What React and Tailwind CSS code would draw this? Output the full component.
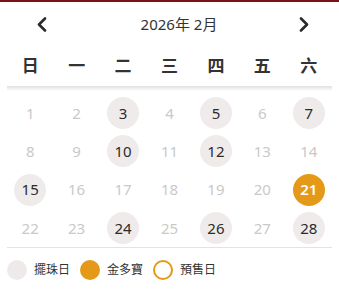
import React from "react";

const weekdays = ["日", "一", "二", "三", "四", "五", "六"];

// 擺珠日 days (gray), 金多寶 day (orange)
const marked = [3, 5, 7, 10, 12, 15, 24, 26, 28];
const jackpot = [21];

const days = Array.from({ length: 28 }, (_, i) => i + 1);

const Chevron = ({ dir }) => (
  <svg width="12" height="15" viewBox="0 0 12 15" fill="none">
    <path
      d={dir === "left" ? "M9 1.5 L3 7.5 L9 13.5" : "M3 1.5 L9 7.5 L3 13.5"}
      stroke="#2b2b2b"
      strokeWidth="2.6"
      strokeLinecap="round"
      strokeLinejoin="round"
    />
  </svg>
);

const App = () => {
  return (
    <div
      className="w-[339px] h-[291px] bg-white border-t-2 border-[#7a1414] overflow-hidden"
      style={{ fontFamily: '"Noto Sans", "Noto Sans CJK TC", sans-serif' }}
    >
      {/* HEADER */}
      <div className="h-[44px] flex items-center pl-[36px] pr-[29px]">
        <Chevron dir="left" />
        <div className="flex-1 text-center pl-[12px] text-[15px] text-[#333]">
          2026年 2月
        </div>
        <Chevron dir="right" />
      </div>

      {/* WEEKDAYS */}
      <div className="mx-[7px] grid grid-cols-7 h-[40px] items-center">
        {weekdays.map((w) => (
          <div
            key={w}
            className="text-center text-[17px] font-semibold text-[#333]"
          >
            {w}
          </div>
        ))}
      </div>
      <div className="mx-[7px] h-[5px] bg-gradient-to-b from-[#e0e0e0] to-white" />

      {/* DAYS */}
      <div className="mx-[7px] mt-[3px] grid grid-cols-7">
        {days.map((d) => {
          const isMarked = marked.includes(d);
          const isJackpot = jackpot.includes(d);
          return (
            <div key={d} className="h-[38.3px] flex items-center justify-center">
              <div
                className={`w-[32px] h-[32px] rounded-full flex items-center justify-center text-[15px] ${
                  isJackpot
                    ? "bg-[#e49a18] text-white font-semibold"
                    : isMarked
                    ? "bg-[#f0ebeb] text-[#2b2b2b]"
                    : "text-[#c9c9c9]"
                }`}
              >
                {d}
              </div>
            </div>
          );
        })}
      </div>

      {/* LEGEND */}
      <div className="mx-[7px] border-t border-[#e3e3e3] pt-[12px] flex items-center text-[12px] text-[#333]">
        <span className="w-[20px] h-[20px] rounded-full bg-[#efeaea]" />
        <span className="ml-[7px]">擺珠日</span>
        <span className="ml-[10px] w-[20px] h-[20px] rounded-full bg-[#e49a18]" />
        <span className="ml-[7px]">金多寶</span>
        <span className="ml-[10px] w-[20px] h-[20px] rounded-full border-2 border-[#e49a18]" />
        <span className="ml-[7px]">預售日</span>
      </div>
    </div>
  );
};

export default App;
